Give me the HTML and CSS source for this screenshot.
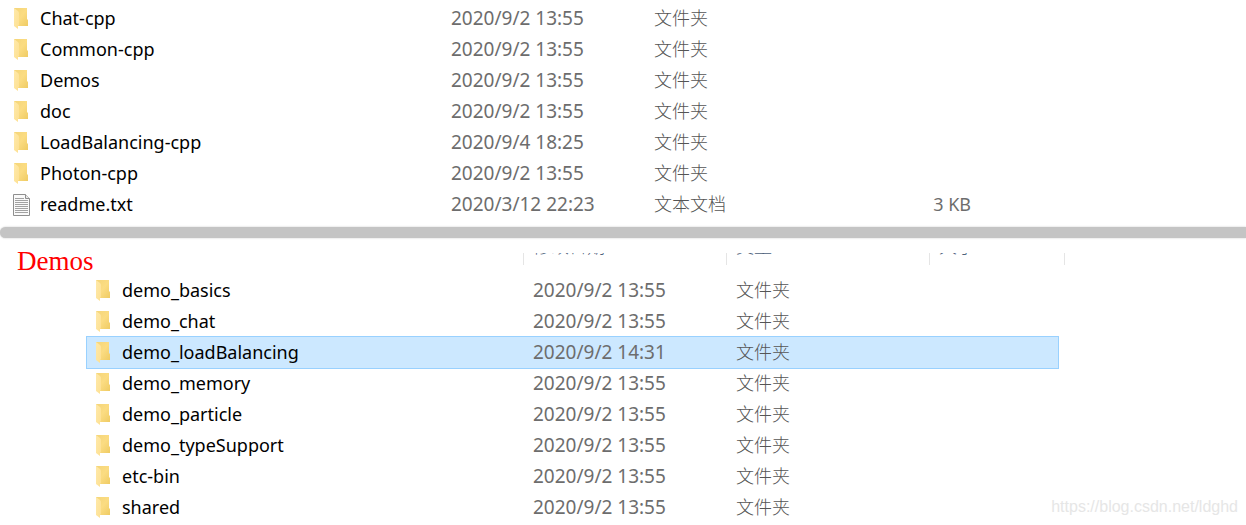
FILE: index.html
```
<!DOCTYPE html>
<html lang="zh-CN">
<head>
  <meta charset="UTF-8" />
  <meta name="viewport" content="width=device-width, initial-scale=1.0"/>
  <title>Demos</title>
  <link rel="stylesheet" href="styles.css">
</head>
<body>
  <svg class="symbols" aria-hidden="true">
    <defs>
      <linearGradient id="folderBack" x1="0" y1="0" x2="1" y2="1">
        <stop offset="0" stop-color="#f4d579"/>
        <stop offset="0.5" stop-color="#fbdc82"/>
        <stop offset="1" stop-color="#efcb63"/>
      </linearGradient>
      <linearGradient id="folderFront" x1="0" y1="0" x2="1" y2="1">
        <stop offset="0" stop-color="#ffe9a9"/>
        <stop offset="1" stop-color="#fde092"/>
      </linearGradient>
    </defs>
    <symbol id="folder" viewBox="0 0 18 22">
      <path d="M1 0H14V11L15 12V18H4L1 17Z" fill="url(#folderBack)"/>
      <path d="M1 0L5 3Q6 4 6 5V17L5 18V21L1 18Z" fill="url(#folderFront)"/>
    </symbol>
    <symbol id="file" viewBox="0 0 18 22">
      <path d="M.5 .5H12.500L16.500 4.500V21.500H.5Z" fill="#fafafa" stroke="#8f8f8f"/>
      <path d="M12.500 .5V4.500H16.500" fill="#e8e8e8" stroke="#8f8f8f"/>
      <path d="M2 4.500H11M2 6.500H15M2 8.500H15M2 10.500H15M2 12.500H15M2 14.500H15M2 16.500H15M2 18.500H15" stroke="#a2a2a2" fill="none"/>
    </symbol>
  </svg>

  <table class="files">
    <colgroup><col class="col-name"><col class="col-date"><col class="col-type"><col class="col-size"></colgroup>
    <tbody>
      <tr><td class="name"><svg class="icon"><use href="#folder"/></svg>Chat-cpp</td><td class="date">2020/9/2 13:55</td><td class="type">文件夹</td><td></td></tr>
      <tr><td class="name"><svg class="icon"><use href="#folder"/></svg>Common-cpp</td><td class="date">2020/9/2 13:55</td><td class="type">文件夹</td><td></td></tr>
      <tr><td class="name"><svg class="icon"><use href="#folder"/></svg>Demos</td><td class="date">2020/9/2 13:55</td><td class="type">文件夹</td><td></td></tr>
      <tr><td class="name"><svg class="icon"><use href="#folder"/></svg>doc</td><td class="date">2020/9/2 13:55</td><td class="type">文件夹</td><td></td></tr>
      <tr><td class="name"><svg class="icon"><use href="#folder"/></svg>LoadBalancing-cpp</td><td class="date">2020/9/4 18:25</td><td class="type">文件夹</td><td></td></tr>
      <tr><td class="name"><svg class="icon"><use href="#folder"/></svg>Photon-cpp</td><td class="date">2020/9/2 13:55</td><td class="type">文件夹</td><td></td></tr>
      <tr><td class="name"><svg class="icon"><use href="#file"/></svg>readme.txt</td><td class="date">2020/3/12 22:23</td><td class="type">文本文档</td><td class="size">3 KB</td></tr>
    </tbody>
  </table>

  <div class="divider"></div>

  <div class="demos-head">
    <h2>Demos</h2>
    <span class="col-label">修改日期</span>
    <span class="col-label">类型</span>
    <span class="col-label last">大小</span>
  </div>
  <table class="files demos">
    <colgroup><col class="col-name"><col class="col-date"><col class="col-type"><col class="col-size"></colgroup>
    <tbody>
      <tr><td class="name"><svg class="icon"><use href="#folder"/></svg>demo_basics</td><td class="date">2020/9/2 13:55</td><td class="type">文件夹</td><td></td></tr>
      <tr><td class="name"><svg class="icon"><use href="#folder"/></svg>demo_chat</td><td class="date">2020/9/2 13:55</td><td class="type">文件夹</td><td></td></tr>
      <tr class="selected"><td class="name"><svg class="icon"><use href="#folder"/></svg>demo_loadBalancing</td><td class="date">2020/9/2 14:31</td><td class="type">文件夹</td><td></td></tr>
      <tr><td class="name"><svg class="icon"><use href="#folder"/></svg>demo_memory</td><td class="date">2020/9/2 13:55</td><td class="type">文件夹</td><td></td></tr>
      <tr><td class="name"><svg class="icon"><use href="#folder"/></svg>demo_particle</td><td class="date">2020/9/2 13:55</td><td class="type">文件夹</td><td></td></tr>
      <tr><td class="name"><svg class="icon"><use href="#folder"/></svg>demo_typeSupport</td><td class="date">2020/9/2 13:55</td><td class="type">文件夹</td><td></td></tr>
      <tr><td class="name"><svg class="icon"><use href="#folder"/></svg>etc-bin</td><td class="date">2020/9/2 13:55</td><td class="type">文件夹</td><td></td></tr>
      <tr><td class="name"><svg class="icon"><use href="#folder"/></svg>shared</td><td class="date">2020/9/2 13:55</td><td class="type">文件夹</td><td></td></tr>
    </tbody>
  </table>

  <span class="watermark">https://blog.csdn.net/ldghd</span>
</body>
</html>
```
FILE: styles.css
```
body {
  position: relative;
  margin: 0;
  padding-top: 3px;
  background: #fff;
  color: #000;
  font-family: "Noto Sans", "Noto Sans CJK SC", sans-serif;
  font-size: 18px;
  overflow-x: hidden;
}
.symbols {
  position: absolute;
  width: 0;
  height: 0;
}
.files {
  width: 971px;
  margin-left: 5px;
  table-layout: fixed;
  border-collapse: collapse;
}
.files.demos {
  margin-left: 87px;
}
.col-name {
  width: 436px;
}
.col-date,
.col-type {
  width: 203px;
}
.files td {
  height: 30px;
  padding: 0 0 1px 10px;
  line-height: 30px;
  color: #6d6d6d;
  white-space: nowrap;
}
.files td.name {
  padding-left: 8px;
  color: #000;
}
.files td.date {
  font-size: 19px;
}
.files td.type {
  height: 28px;
  padding-bottom: 3px;
  font-family: "Noto Sans CJK SC", sans-serif;
  font-weight: 300;
  line-height: 28px;
  color: #555;
}
.files td.size {
  padding-right: 5px;
  text-align: right;
}
.icon {
  width: 18px;
  height: 22px;
  margin: 0 9px 2px 0;
  vertical-align: middle;
}
.selected {
  background: #cce8ff;
  outline: 1px solid #99d1ff;
}
.divider {
  height: 11px;
  margin-top: 7px;
  border-radius: 6px 0 0 6px;
  background: #c4c4c4;
  box-shadow: 0 0 2px #c4c4c4;
}
.demos-head {
  display: grid;
  grid-template-columns: 523px 203px 203px 136px;
  height: 37px;
}
.demos-head h2 {
  margin: 0;
  padding-left: 17px;
  color: #f00;
  font-family: "Liberation Serif", serif;
  font-size: 27px;
  font-weight: normal;
  line-height: 46px;
}
/* only the lower edge of the column labels shows */
.col-label {
  display: flex;
  align-items: flex-end;
  height: 12px;
  margin-top: 15px;
  padding-left: 9px;
  border-left: 1px solid #e5e5e5;
  color: #4c607a;
  font-family: "Noto Sans CJK SC", sans-serif;
  font-weight: 300;
  line-height: 40px;
  overflow: hidden;
}
.col-label.last {
  border-right: 1px solid #e5e5e5;
}
.watermark {
  position: absolute;
  right: 8px;
  bottom: 6px;
  color: #e6e6e6;
  font-family: "Liberation Sans", sans-serif;
  font-size: 16px;
  line-height: 20px;
}
```
